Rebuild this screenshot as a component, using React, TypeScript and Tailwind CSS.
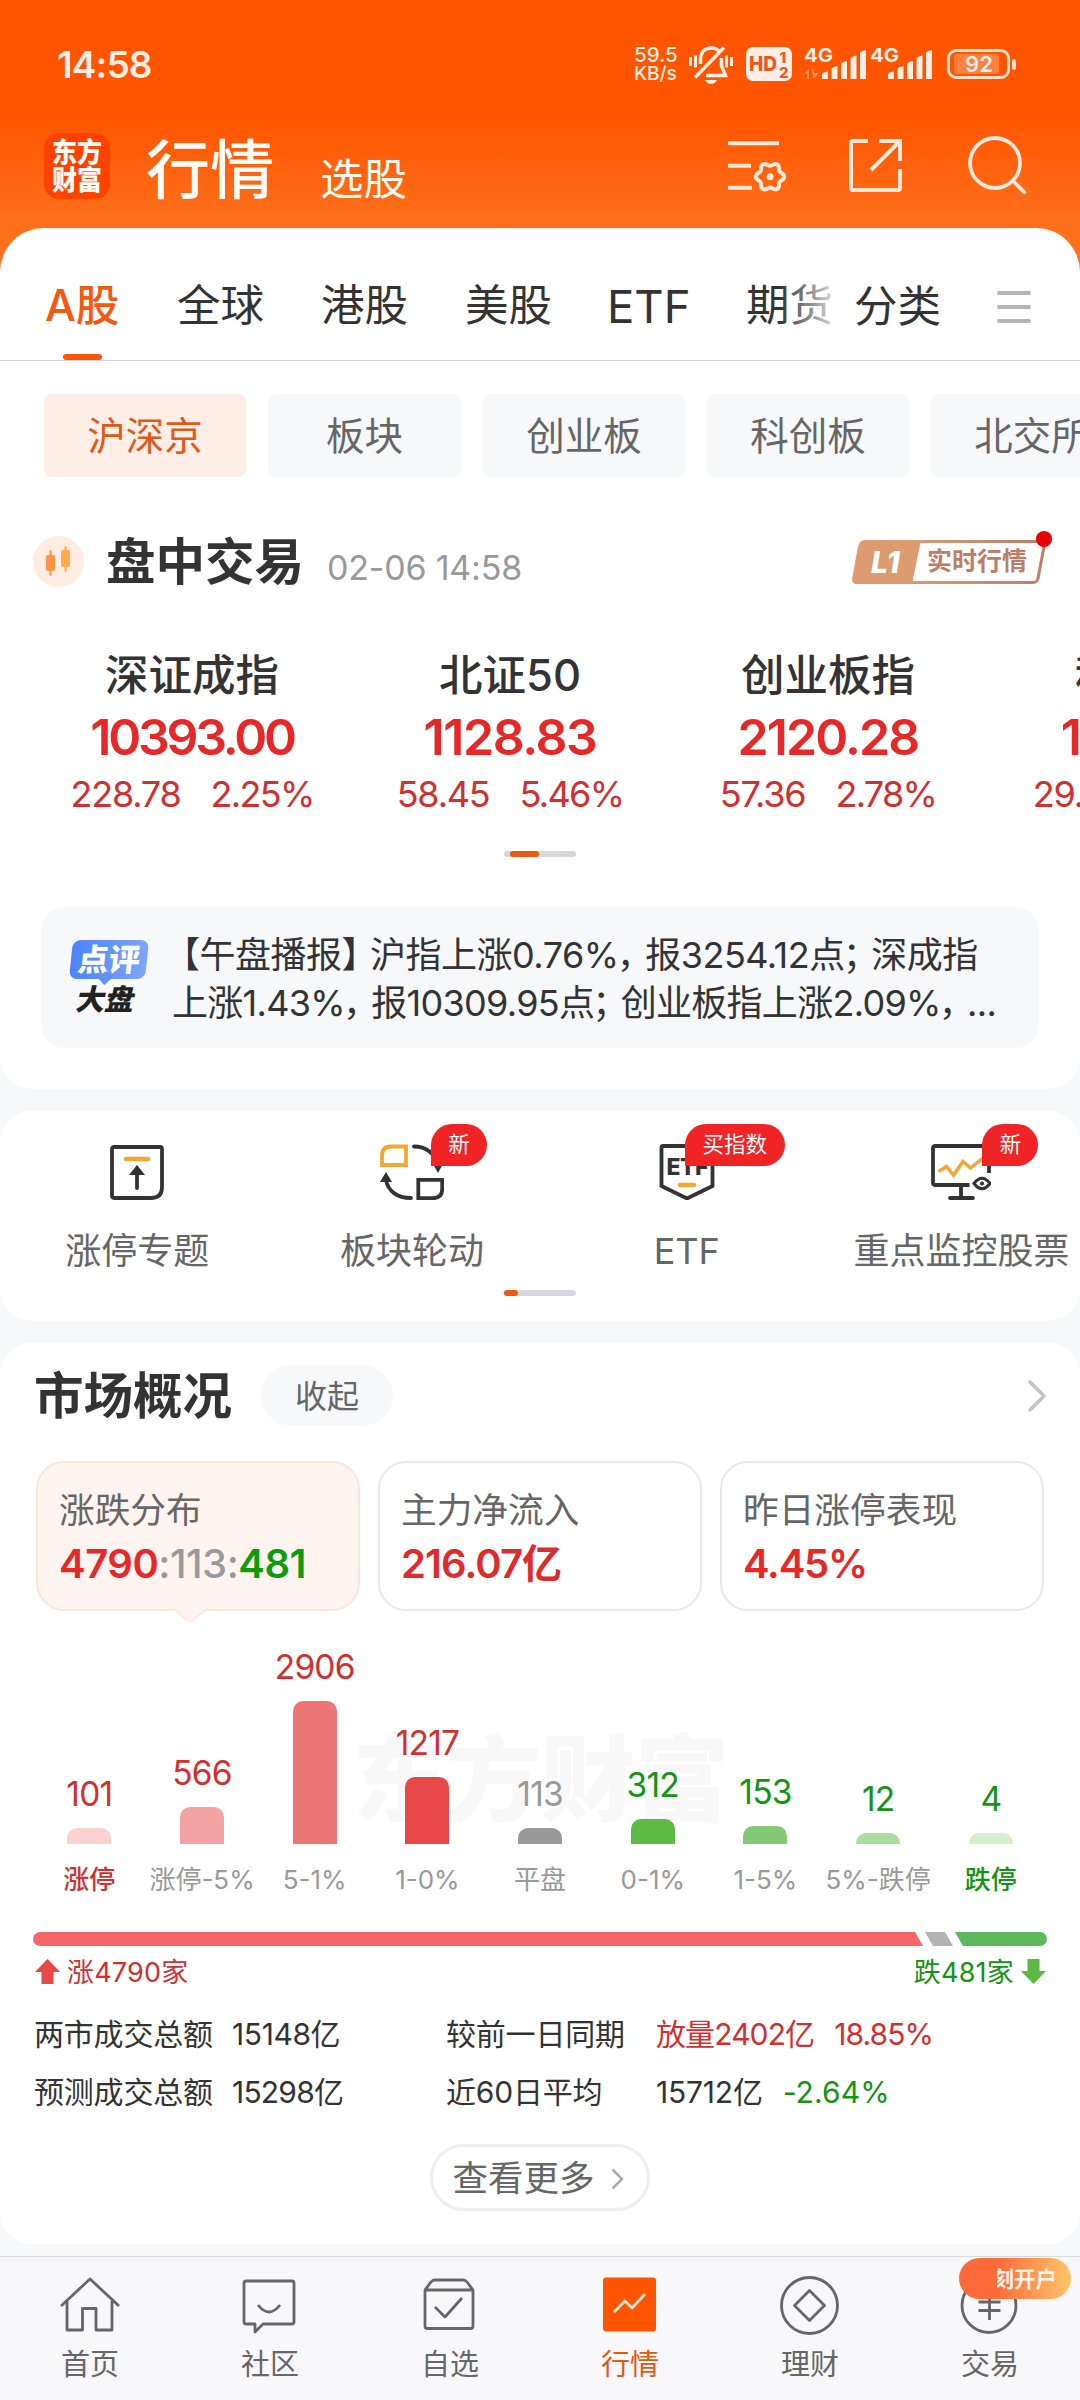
import type { ReactNode } from 'react'
import clsx from 'clsx'

const tabs = [
  { label: 'A股', width: 'w-[74px]', active: true },
  { label: '全球', width: 'w-[86px]' },
  { label: '港股', width: 'w-[86px]' },
  { label: '美股', width: 'w-[84px]' },
  { label: 'ETF', width: 'w-[81px] text-[45.500px]' },
  { label: '期货', width: 'w-[86px]' },
]

const chips = [
  { label: '沪深京', width: 'w-[202px]', active: true },
  { label: '板块', width: 'w-[193px]' },
  { label: '创业板', width: 'w-[202px]' },
  { label: '科创板', width: 'w-[202px]' },
  { label: '北交所', width: 'w-[202px]' },
]

const indexes = [
  { name: '深证成指', value: '10393.00', tracking: 'tracking-[-3.200px]', change: '228.78', percent: '2.25%' },
  { name: '北证50', value: '1128.83', tracking: 'tracking-[-1.400px]', change: '58.45', percent: '5.46%' },
  { name: '创业板指', value: '2120.28', tracking: 'tracking-[-1.900px]', change: '57.36', percent: '2.78%' },
  { name: '科创50', value: '1001.37', tracking: 'tracking-[-1.900px]', change: '29.04', percent: '2.99%' },
]

const bars = [
  { count: 101, label: '涨停', height: 16, bar: 'bg-[#f9d1d1]', text: 'text-[#d0302f]', edge: true },
  { count: 566, label: '涨停-5%', height: 37, bar: 'bg-[#f4a3a4]', text: 'text-[#d0302f]' },
  { count: 2906, label: '5-1%', height: 143, bar: 'bg-[#ed7576]', text: 'text-[#d0302f]' },
  { count: 1217, label: '1-0%', height: 67, bar: 'bg-[#e84848]', text: 'text-[#d0302f]' },
  { count: 113, label: '平盘', height: 16, bar: 'bg-[#999999]', text: 'text-[#999999]' },
  { count: 312, label: '0-1%', height: 25, bar: 'bg-[#5cb944]', text: 'text-[#139413]' },
  { count: 153, label: '1-5%', height: 18, bar: 'bg-[#84ca74]', text: 'text-[#139413]' },
  { count: 12, label: '5%-跌停', height: 11, bar: 'bg-[#addca1]', text: 'text-[#139413]' },
  { count: 4, label: '跌停', height: 11, bar: 'bg-[#d6eed0]', text: 'text-[#139413]', edge: true },
]

function gearPoints(cx: number, cy: number) {
  return Array.from({ length: 72 })
    .map((_, i) => {
      const a = (i * Math.PI) / 36
      const r = 12.6 + 1.7 * Math.cos(6 * a)
      return `${(cx + r * Math.cos(a)).toFixed(2)},${(cy + r * Math.sin(a)).toFixed(2)}`
    })
    .join(' ')
}

function Signal({ data }: { data?: boolean }) {
  return (
    <svg width="66" height="40" viewBox="0 0 66 40" fill="#ffeee6">
      <text x="1" y="17.5" fontSize="19" fontWeight="700" textLength="29" lengthAdjust="spacingAndGlyphs">4G</text>
      {data && <path d="M1 30l5-5v10H4v-5zM9 25h2v4h5l-6 6z" opacity=".4" />}
      <path d="M19 31q0-3 6-3.500V35h-6zM28.500 25q1-2 6-3v13h-6zM38 20q1-2 6-3v18h-6zM47.500 14.500q1-2 6-3V35h-6zM57 9q1-2 6-3v29h-6z" />
    </svg>
  )
}

function StatusBar() {
  return (
    <div className="flex h-32 items-center pl-[57px] text-[#ffeee6]">
      <span className="text-[37px] font-semibold leading-none tracking-[-0.900px]">14:58</span>
      <div className="ml-auto flex items-center pr-[62px]">
        <div className="w-[54px] text-[20.500px] font-medium leading-[19px]">
          <div>59.5</div>
          <div className="text-[19px]">KB/s</div>
        </div>
        {/* Muted bell */}
        <svg className="mr-3" width="46" height="40" viewBox="0 0 46 40" fill="none" stroke="#ffeee6" strokeWidth="3.500">
          <path d="M2.500 13v9M7.500 11.500v12M38.500 11.500v12M43.500 13v9" strokeWidth="3" />
          <path d="M12.500 20v-4C12.500 8 17 4 23 4c4 0 7 1.500 8.500 4M33.500 14v8l4 9.500H18" />
          <path d="M7 33.500L36 3.500" />
          <path d="M17 36h12q-2 4-6 4t-6-4z" fill="#ffeee6" stroke="none" />
        </svg>
        <svg className="mr-[11px]" width="46" height="40" viewBox="0 0 46 40">
          <rect y="3" width="46" height="34" rx="7" fill="#ffeee6" />
          <g fill="#f2551a" fontWeight="800">
            <text x="3" y="27" fontSize="20" textLength="28" lengthAdjust="spacingAndGlyphs">HD</text>
            <text x="33.500" y="18.500" fontSize="15">1</text>
            <text x="33" y="33.500" fontSize="15">2</text>
          </g>
        </svg>
        <Signal data />
        <Signal />
        <svg className="ml-3" width="71" height="40" viewBox="0 0 71 40">
          <rect x="1.500" y="6.500" width="60" height="27" rx="7.500" fill="none" stroke="#ffe0cf" strokeWidth="3" />
          <rect x="7" y="10" width="45" height="20" rx="3" fill="#ffffff" opacity=".25" />
          <rect x="65" y="15" width="4" height="11" rx="2" fill="#ffe0cf" />
          <text x="32" y="28" fontSize="22" fontWeight="600" fill="#ffeee6" textAnchor="middle">92</text>
        </svg>
      </div>
    </div>
  )
}

function Header() {
  return (
    <div className="flex h-[100px] items-start pl-11 text-[#fffaf3]">
      <div className="mt-[5px] flex size-[66px] flex-col items-center justify-center rounded-[15px] bg-[#ff4200] text-[25px] font-black leading-[28px]">
        <span className="scale-y-110">东方</span>
        <span className="scale-y-110">财富</span>
      </div>
      <span className="ml-9 mt-[10px] text-[64px] font-medium leading-[64px]">行情</span>
      <span className="ml-[46px] mt-[30px] text-[43.500px] leading-[43px]">选股</span>
      <div className="ml-auto mr-[52px] mt-2 flex items-start">
        <svg className="mr-[62px] mt-1" width="58" height="54" viewBox="0 0 58 54" fill="none" stroke="#ffe8d8" strokeWidth="4">
          <path d="M0 3.300h51M0 25.700h23M0 47.700h24" />
          <polygon points={gearPoints(42, 36.7)} />
          <circle cx="42" cy="36.700" r="3.500" fill="#ffe8d8" stroke="none" />
        </svg>
        <svg className="mr-16 mt-0.5" width="56" height="56" viewBox="0 0 56 56" fill="none" stroke="#ffe8d8" strokeWidth="4">
          <path d="M20 3H5q-2 0-2 2v45q0 2 2 2h45q2 0 2-2V31M31 3h21v20M52 3L23 32" />
        </svg>
        <svg width="60" height="60" viewBox="0 0 60 60" fill="none" stroke="#ffe8d8" strokeWidth="3.800">
          <circle cx="27" cy="27" r="25" />
          <path d="M44.500 44.500l13 13" />
        </svg>
      </div>
    </div>
  )
}

function Pager({ thumb }: { thumb: string }) {
  return (
    <div className="mx-auto h-1.5 w-[72px] rounded-full bg-[#d4d8dc]">
      <div className={clsx('h-full rounded-full bg-[#f0580f]', thumb)} />
    </div>
  )
}

// Full-width punctuation with its trailing blank trimmed
function Punct({ children }: { children: string }) {
  return <span className="-ml-[2px] -mr-[7px]">{children}</span>
}

function MarketCard() {
  return (
    <section className="h-[861px] overflow-hidden rounded-t-[44px] rounded-b-[32px] bg-white">
      <div className="relative flex h-[133px] items-center border-b border-[#d4d5d7] pl-[45px] pt-[25px]">
        <div className="flex gap-[58px] text-[43.500px] leading-none text-[#333]">
          {tabs.map((t) => (
            <span key={t.label} className={clsx('whitespace-nowrap', t.width, t.active && 'font-medium text-[#f4590f]')}>
              {t.label}
            </span>
          ))}
        </div>
        <span className="z-10 ml-[22px] whitespace-nowrap text-[43.500px] leading-none text-[#333]">分类</span>
        <div className="ml-auto mr-[49px] flex w-[34px] flex-col gap-[10px]">
          <i className="h-1 rounded bg-[#b5b5b5]" />
          <i className="h-1 rounded bg-[#b5b5b5]" />
          <i className="h-1 rounded bg-[#b5b5b5]" />
        </div>
        <div className="absolute left-[780px] top-12 h-16 w-[60px] bg-linear-to-r from-white/0 to-white/90" />
        <div className="absolute bottom-0 left-[63px] h-1.5 w-[39px] rounded-full bg-[#ff5500]" />
      </div>

      <div className="mt-[33px] flex gap-[22px] pl-11">
        {chips.map((c) => (
          <div
            key={c.label}
            className={clsx(
              'flex h-[83px] shrink-0 items-center justify-center rounded-lg pt-0.5 text-[38.500px] leading-none',
              c.width,
              c.active ? 'bg-[#ffeee6] text-[#dd5a17]' : 'bg-[#f7f8fa] text-[#666]',
            )}
          >
            {c.label}
          </div>
        ))}
      </div>

      <div className="mt-[59px] flex h-[51px] items-center pl-[33px] pr-[34px]">
        <svg width="51" height="51" viewBox="0 0 51 51">
          <circle cx="25.500" cy="25.500" r="25.500" fill="#ffede3" />
          <g fill="#ff9447">
            <rect x="13" y="19" width="9" height="16" rx="2" />
            <rect x="16.500" y="14" width="2" height="26" rx="1" />
          </g>
          <g fill="#ffab52">
            <rect x="28" y="14" width="9" height="17" rx="2" />
            <rect x="31.500" y="10" width="2" height="26" rx="1" />
          </g>
        </svg>
        <h2 className="ml-[22px] mt-0.5 text-[49.500px] font-bold leading-none text-[#333]">盘中交易</h2>
        <span className="ml-[23px] mt-3 text-[34px] leading-none tracking-[-0.200px] text-[#999]">02-06 14:58</span>
        <div className="relative ml-auto h-11 w-[194px]">
          <svg className="absolute inset-0" width="194" height="44" viewBox="0 0 194 44">
            <defs>
              <linearGradient id="l1">
                <stop offset="0" stopColor="#e4aa7c" />
                <stop offset="1" stopColor="#bd7d68" />
              </linearGradient>
            </defs>
            <path d="M14 1.500h174q5 0 4 5l-6 32q-1 4-5 4H5q-4 0-3.500-4l6-32q1-5 6.500-5z" fill="#fff" stroke="url(#l1)" strokeWidth="3" />
            <path d="M14 0h55l-9 44H5q-5 0-4-5l6-33q1-6 7-6z" fill="#dc9c70" />
          </svg>
          <span className="absolute left-[19px] top-[7px] text-[30px] font-extrabold italic leading-none text-white">L1</span>
          <span className="absolute left-[75px] top-[9px] whitespace-nowrap text-[25px] font-bold leading-none text-[#bd7d68]">实时行情</span>
          <i className="absolute -right-[6px] -top-[9px] size-4 rounded-full bg-[#e60000]" />
        </div>
      </div>

      <div className="mt-[62px] flex pl-[33px]">
        {indexes.map((x) => (
          <div key={x.name} className="flex w-[318px] shrink-0 flex-col items-center whitespace-nowrap">
            <div className="text-[43.500px] font-medium leading-[52px] text-[#333]">{x.name}</div>
            <div className={clsx('mt-[9px] text-[50px] font-semibold leading-[54px] text-[#e62828]', x.tracking)}>{x.value}</div>
            <div className="mt-[6px] flex gap-[30px] text-[36px] leading-[48px] tracking-[-1.200px] text-[#d0302f]">
              <span>{x.change}</span>
              <span className="tracking-[-1.700px]">{x.percent}</span>
            </div>
          </div>
        ))}
      </div>

      <div className="mt-[33px]">
        <Pager thumb="ml-1.5 w-[29px]" />
      </div>

      <div className="ml-[41px] mt-[50px] flex h-[141px] w-[998px] items-center rounded-3xl bg-[#f7f8fa]">
        <div className="ml-[28px] flex w-[80px] flex-col items-center">
          <div className="relative flex h-[39px] w-[76px] -skew-x-6 items-center justify-center rounded-lg bg-linear-to-r from-[#4d82fb] to-[#7da5fb] text-[31px] font-black leading-none text-white">
            点评
            <i className="absolute -bottom-1 left-[31px] size-2.5 rotate-45 bg-[#5f8ffb]" />
          </div>
          <div className="mr-[5px] mt-[6px] -skew-x-12 text-[29px] font-black leading-[30px] text-[#222]">大盘</div>
        </div>
        <div className="ml-[23px] whitespace-nowrap pt-0.5 text-[36px] leading-[48px] text-[#333]">
          <div className="-ml-[8px] tracking-[-0.500px]">
            【午盘播报<span className="-mr-[7px]">】</span>沪指上涨0.76%<Punct>，</Punct>报3254.12点<Punct>；</Punct>深成指
          </div>
          <div className="tracking-[-0.700px]">
            上涨1.43%<Punct>，</Punct>报10309.95点<Punct>；</Punct>创业板指上涨2.09%<Punct>，</Punct>...
          </div>
        </div>
      </div>
    </section>
  )
}

function Feature({ label, badge, children }: { label: string; badge?: string; children: ReactNode }) {
  return (
    <div className="flex w-[274.700px] shrink-0 flex-col items-center">
      <div className="relative h-14">
        {children}
        {badge && (
          <span
            className={clsx(
              'absolute -top-[20px] flex h-[42px] items-center justify-center whitespace-nowrap rounded-full rounded-bl-none bg-[#f02424] text-[21.500px] leading-none text-white',
              badge.length > 1 ? 'left-[26px] w-[100px]' : 'left-[51px] w-14',
            )}
          >
            {badge}
          </span>
        )}
      </div>
      <span className="mt-[33px] whitespace-nowrap text-[36px] leading-[36px] text-[#666]">{label}</span>
    </div>
  )
}

function FeatureCard() {
  return (
    <section className="mt-[22px] h-[210px] overflow-hidden rounded-[32px] bg-white pt-[33px]">
      <div className="flex">
        <Feature label="涨停专题">
          <svg width="56" height="56" viewBox="0 0 56 56" fill="none" stroke="#333" strokeWidth="3.800">
            <path d="M5 3h46q2 0 2 2v38q0 11-11 11H5q-2 0-2-2V5q0-2 2-2z" />
            <path d="M17 15h22" stroke="#f3a733" strokeWidth="4.500" strokeLinecap="round" />
            <path d="M28 26v18" strokeLinecap="round" />
            <path d="M28 21l8 10H20z" fill="#333" stroke="none" />
          </svg>
        </Feature>
        <Feature label="板块轮动" badge="新">
          <svg width="64" height="56" viewBox="0 0 64 56" fill="none" stroke="#333" strokeWidth="3.800">
            <path d="M2 21V12q0-9.500 9-9.500h15V21z" stroke="#f3a733" />
            <path d="M38.300 35.800h23.900V45q0 9.200-9.200 9.200H38.300z" />
            <path d="M34 2.500c12 0 21 7 24 18M31 54C17 54 8 47 6 36" strokeLinecap="round" />
            <path d="M52.500 19h11L58 29zM0 38h12L6 28z" fill="#333" stroke="none" />
          </svg>
        </Feature>
        <Feature label="ETF" badge="买指数">
          <svg width="56" height="56" viewBox="0 0 56 56" fill="none" stroke="#333" strokeWidth="3.800">
            <path d="M4 2h48q1.500 0 1.500 1.500V42L28 54.500 2.500 42V3.500Q2.500 2 4 2z" />
            <text x="7.500" y="31" fontSize="23" fontWeight="800" fill="#333" stroke="none" textLength="42">ETF</text>
            <path d="M21 41h14" stroke="#f3a733" strokeWidth="4.500" strokeLinecap="round" />
          </svg>
        </Feature>
        <Feature label="重点监控股票" badge="新">
          <svg width="60" height="56" viewBox="0 0 60 56" fill="none" stroke="#333" strokeWidth="3.800">
            <path d="M38.500 41H4q-2 0-2-2V4q0-2 2-2h52q2 0 2 2v25" />
            <path d="M7.500 27.500l8-5 7 8.500L32 17.500l7.500 6.500L52 14" stroke="#f3a733" strokeWidth="3.500" />
            <path d="M30 42v11M19 54h23" strokeLinecap="round" />
            <path d="M43 39.500q8-10.500 16 0-8 10.500-16 0z" strokeWidth="3" />
            <circle cx="51" cy="39.500" r="2" fill="#333" stroke="none" />
          </svg>
        </Feature>
      </div>
      <div className="mt-[21px]">
        <Pager thumb="w-3.5" />
      </div>
    </section>
  )
}

function Distribution() {
  return (
    <div className="relative mt-[13px] h-[269px] pl-[33px]">
      <span className="absolute left-[353px] top-[106px] text-[94px] font-black leading-[100px] text-[#f8f8f8]">东方财富</span>
      <div className="relative flex h-[220px] items-end">
        {bars.map((b) => (
          <div key={b.label} className="flex w-[112.700px] flex-col items-center">
            <span className={clsx('mb-[17px] text-[33.500px] leading-[34px] tracking-[-0.800px]', b.text)}>{b.count}</span>
            <div className={clsx('w-11 rounded-t-[10px]', b.bar)} style={{ height: b.height }} />
          </div>
        ))}
      </div>
      <div className="mt-[22px] flex">
        {bars.map((b) => (
          <div
            key={b.label}
            className={clsx(
              'flex w-[112.700px] justify-center whitespace-nowrap text-[26px] leading-[28px]',
              b.edge ? clsx('font-medium', b.text) : 'text-[#999]',
            )}
          >
            {b.label}
          </div>
        ))}
      </div>
    </div>
  )
}

function Overview() {
  return (
    <section className="mt-[22px] h-[901px] overflow-hidden rounded-[32px] bg-white pt-[22px]">
      <div className="flex h-[61px] items-center pl-[34px] pr-[33px]">
        <h2 className="mt-0.5 text-[49.500px] font-bold leading-none text-[#333]">市场概况</h2>
        <span className="ml-[29px] flex h-[61px] w-[132px] items-center justify-center rounded-full bg-[#f7f8fa] pt-0.5 text-[32px] leading-none text-[#666]">收起</span>
        <svg className="ml-auto" width="20" height="34" viewBox="0 0 20 34" fill="none" stroke="#c4c4c4" strokeWidth="3.500">
          <path d="M2 2l15 15L2 32" />
        </svg>
      </div>

      <div className="mt-[35px] flex gap-[18px] pl-9 text-[35.700px] leading-[40px] text-[#666]">
        <div className="relative h-[150px] w-[324px] rounded-[28px] border-2 border-[#fce6da] bg-[#fff4ef] pl-[21px] pt-[27px]">
          <div>涨跌分布</div>
          <div className="mt-[14px] text-[40px] font-semibold tracking-[-0.500px] text-[#e62828]">
            4790<span className="font-medium text-[#999]">:113:</span><span className="text-[#0d9a0d]">481</span>
          </div>
          <svg className="absolute -bottom-[14px] left-[133px]" width="38" height="16" viewBox="0 0 38 16">
            <path d="M0 0h38v2q-3 0-5 2L22 13.500q-3 2-6 0L5 4Q3 2 0 2z" fill="#fff4ef" />
            <path d="M0 2q3 0 5 2l11 9.500q3 2 6 0L33 4q2-2 5-2" fill="none" stroke="#fce6da" strokeWidth="1.500" />
          </svg>
        </div>
        <div className="h-[150px] w-[324px] rounded-[28px] border-2 border-[#e8e8e8] pl-[21px] pt-[27px]">
          <div>主力净流入</div>
          <div className="mt-[14px] text-[40px] font-semibold tracking-[-0.900px] text-[#dc2d2c]">216.07亿</div>
        </div>
        <div className="h-[150px] w-[324px] rounded-[28px] border-2 border-[#e8e8e8] pl-[21px] pt-[27px]">
          <div>昨日涨停表现</div>
          <div className="mt-[14px] text-[40px] font-semibold tracking-[-1.200px] text-[#e62828]">4.45%</div>
        </div>
      </div>

      <Distribution />

      {/* Rise / flat / fall ratio */}
      <svg className="ml-[33px] mt-[39px]" width="1014" height="14" viewBox="0 0 1014 14">
        <path d="M7 0h875l8 14H7A7 7 0 0 1 7 0z" fill="#f66565" />
        <path d="M892 0h20l8 14h-20z" fill="#b3b3b3" />
        <path d="M922 0h85a7 7 0 0 1 0 14h-77z" fill="#5cb85c" />
      </svg>
      <div className="mt-[12px] flex h-7 items-center justify-between pl-[35px] pr-[34px] text-[27px] leading-none">
        <span className="flex items-center gap-[7px] tracking-[0.200px] text-[#d0302f]">
          <svg width="25" height="26" viewBox="0 0 25 26" fill="#e84848">
            <path d="M12.500 0L25 13h-6.500v12h-12V13H0z" />
          </svg>
          涨4790家
        </span>
        <span className="flex items-center gap-[7px] tracking-[0.200px] text-[#139413]">
          跌481家
          <svg width="25" height="26" viewBox="0 0 25 26" fill="#5cb944">
            <path d="M12.500 25L0 12h6.500V0h12v12H25z" />
          </svg>
        </span>
      </div>

      <div className="mt-[19px] grid grid-cols-[198px_214px_210px_1fr] pl-[34px] text-[30px] leading-[58px] text-[#333]">
        <span className="tracking-[-0.200px]">两市成交总额</span>
        <span className="tracking-[-0.400px]">15148亿</span>
        <span className="tracking-[-0.200px]">较前一日同期</span>
        <span className="flex gap-[20px] tracking-[-0.900px] text-[#d0302f]">
          <span>放量2402亿</span>
          <span>18.85%</span>
        </span>
        <span className="tracking-[-0.200px]">预测成交总额</span>
        <span className="tracking-[-0.800px]">15298亿</span>
        <span className="tracking-[-0.200px]">近60日平均</span>
        <span className="flex gap-[20px] tracking-[-0.200px]">
          <span>15712亿</span>
          <span className="tracking-[0.100px] text-[#139413]">-2.64%</span>
        </span>
      </div>

      <div className="mx-auto mt-[23px] flex h-[67px] w-[220px] items-center justify-center gap-[16px] rounded-full border-3 border-[#eee] pr-1 pt-0.5 text-[35.500px] leading-none text-[#666]">
        查看更多
        <svg width="13" height="22" viewBox="0 0 13 22" fill="none" stroke="#aaa" strokeWidth="2.500">
          <path d="M1.500 1.500L11 11l-9.500 9.500" />
        </svg>
      </div>
    </section>
  )
}

function NavItem({ label, active, children }: { label: string; active?: boolean; children: ReactNode }) {
  return (
    <div className={clsx('relative flex w-[180px] flex-col items-center', active ? 'text-[#dd5a17]' : 'text-[#666]')}>
      <svg width="60" height="60" viewBox="0 0 60 60" fill="none" stroke="#666" strokeWidth="2.800" strokeLinejoin="round">
        {children}
      </svg>
      <span className="mt-[14px] text-[29px] leading-[30px]">{label}</span>
    </div>
  )
}

function BottomNav() {
  return (
    <nav className="mt-3 flex h-[144px] border-t border-[#dadbdd] bg-[#f8f8fa] pt-[19px]">
      <NavItem label="首页">
        <path d="M1 30L30 3l29 27" />
        <path d="M7 25v29h15.500V32.500H36V54h16V25" />
      </NavItem>
      <NavItem label="社区">
        <path d="M6 5h46q2 0 2 2v39q0 2-2 2H23l-8 8v-8H6q-2 0-2-2V7q0-2 2-2z" />
        <path d="M18 29q11 14 22 0" />
      </NavItem>
      <NavItem label="自选">
        <path d="M5 14l6-8q1.500-2 4-2h28q2.500 0 4 2l6 8M5 14h48v36q0 2.500-2.500 2.500h-43Q5 52.500 5 50z" />
        <path d="M15 31l10 10 17-19" />
      </NavItem>
      <NavItem label="行情" active>
        <rect x="3" y="1.500" width="53" height="54" rx="3" fill="#ff5500" stroke="none" />
        <path d="M14 36l11-11 7 7 13-14" stroke="#ffe8d8" />
      </NavItem>
      <NavItem label="理财">
        <circle cx="29.500" cy="29.500" r="28" />
        <path d="M29.500 14.500l15 15-15 15-15-15z" />
      </NavItem>
      <div className="relative">
        <NavItem label="交易">
          <circle cx="29" cy="29.500" r="27" />
          <path d="M22 15l7.500 8 7.500-8M18.500 26h22M18.500 34.500h22M29.500 23v21" />
        </NavItem>
        <div className="absolute -top-[18px] left-[59px] flex h-[41px] w-[112px] items-center rounded-full bg-linear-to-r from-[#ff6a3a] from-35% to-[#ffc46a] pl-[38px]">
          <span className="flex w-[60px] justify-end overflow-hidden whitespace-nowrap text-[21.500px] font-bold leading-[26px] text-[#fff5ea]">立刻开户</span>
        </div>
      </div>
    </nav>
  )
}

export default function App() {
  return (
    <main className="h-[2400px] w-[1080px] overflow-hidden bg-[#f6f8fa] font-[Inter,'Noto_Sans_CJK_SC',sans-serif]">
      <div className="bg-[linear-gradient(#ff5500_0,#ff5500_115px,#ff701c_225px,#ff701c_280px,#f6f8fa_280px)]">
        <StatusBar />
        <Header />
        <MarketCard />
      </div>
      <FeatureCard />
      <Overview />
      <BottomNav />
    </main>
  )
}
